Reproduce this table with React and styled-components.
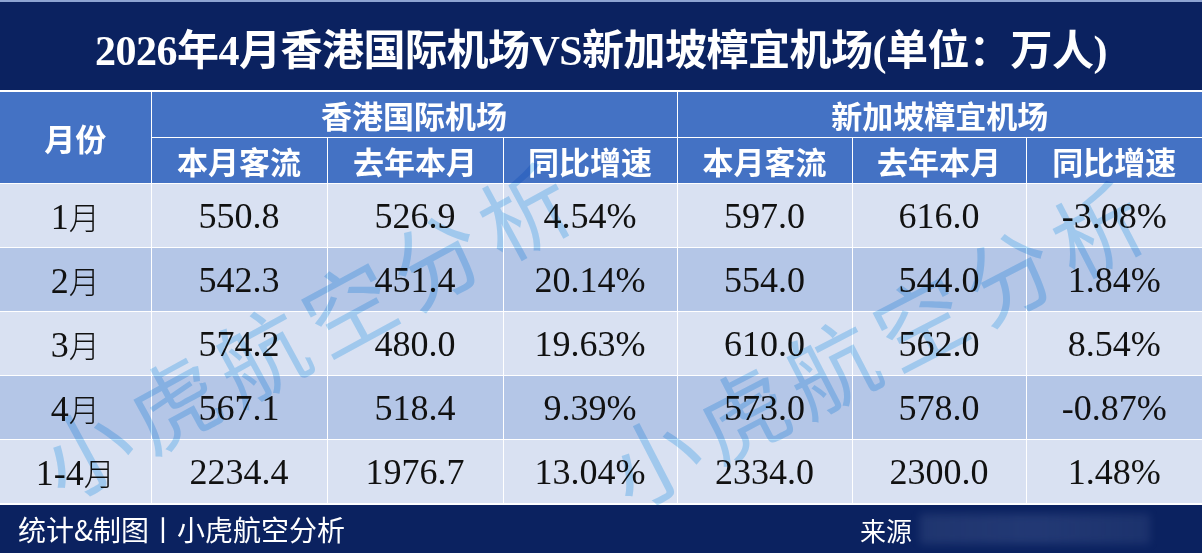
import styled, { createGlobalStyle } from "styled-components";

const GlobalStyle = createGlobalStyle`
  html, body {
    margin: 0;
    padding: 0;
    background: #ffffff;
  }
`;

const Board = styled.div`
  position: relative;
  width: 1202px;
  height: 553px;
  overflow: hidden;
  display: flex;
  flex-direction: column;
  background: #ffffff;
  font-family: "Liberation Serif", "Noto Sans CJK SC", serif;
`;

const TitleBar = styled.div`
  height: 88px;
  display: flex;
  align-items: center;
  justify-content: center;
  background: #0b2260;
  border-top: 2px solid #8ea4d2;
  color: #ffffff;
  font-size: 42px;
  font-weight: 700;
  letter-spacing: -0.5px;
`;

const Table = styled.table`
  width: 1202px;
  border-collapse: collapse;
  table-layout: fixed;
  border-top: 2px solid #ffffff;
`;

const HeadCell = styled.th`
  height: 44px;
  padding: 0;
  background: #4472c4;
  color: #ffffff;
  font-size: 31px;
  font-weight: 700;
  border: 1px solid #ffffff;
  text-align: center;
  vertical-align: middle;
  &:first-child { border-left: none; }
  &:last-child { border-right: none; }
`;

const Row = styled.tr`
  background: ${(p) => (p.$alt ? "#b4c6e7" : "#d9e1f2")};
`;

const Cell = styled.td`
  height: 63px;
  padding: 0;
  border: 1px solid #ffffff;
  text-align: center;
  vertical-align: middle;
  color: #111111;
  font-size: 36px;
  white-space: nowrap;
  &:first-child { border-left: none; }
  &:last-child { border-right: none; }
`;

const Unit = styled.span`
  font-family: "Noto Sans CJK SC", sans-serif;
  font-size: 31px;
  font-weight: 300;
`;

const Footer = styled.div`
  flex: 1;
  display: flex;
  align-items: center;
  background: #0b2260;
  border-top: 1px solid #ffffff;
  color: #ffffff;
  font-family: "Noto Sans CJK SC", sans-serif;
  font-size: 28px;
  padding-left: 18px;
`;

const Credit = styled.span`
  width: 842px;
`;

const Source = styled.span`
  font-size: 26px;
`;

const Smudge = styled.span`
  margin-left: 8px;
  width: 230px;
  height: 30px;
  background: linear-gradient(90deg, rgba(180, 195, 225, 0.12), rgba(120, 140, 190, 0.22), rgba(180, 195, 225, 0.1));
  filter: blur(4px);
`;

const Watermark = styled.div`
  position: absolute;
  left: ${(p) => p.$x}px;
  top: ${(p) => p.$y}px;
  transform: rotate(${(p) => p.$r}deg);
  transform-origin: left center;
  font-family: "Noto Sans CJK SC", sans-serif;
  font-size: 90px;
  line-height: 1;
  font-weight: 400;
  letter-spacing: 10px;
  color: rgba(70, 178, 240, 0.36);
  mix-blend-mode: multiply;
  white-space: nowrap;
  pointer-events: none;
`;

const rows = [
  ["1", "550.8", "526.9", "4.54%", "597.0", "616.0", "-3.08%"],
  ["2", "542.3", "451.4", "20.14%", "554.0", "544.0", "1.84%"],
  ["3", "574.2", "480.0", "19.63%", "610.0", "562.0", "8.54%"],
  ["4", "567.1", "518.4", "9.39%", "573.0", "578.0", "-0.87%"],
  ["1-4", "2234.4", "1976.7", "13.04%", "2334.0", "2300.0", "1.48%"],
];

const widths = [151, 176, 176, 174, 175, 174, 176];
const subHeads = ["本月客流", "去年本月", "同比增速"];

export default function App() {
  return (
    <Board>
      <GlobalStyle />
      <TitleBar>2026年4月香港国际机场VS新加坡樟宜机场(单位：万人)</TitleBar>
      <Table>
        <colgroup>
          {widths.map((w, i) => (
            <col key={i} style={{ width: w }} />
          ))}
        </colgroup>
        <thead>
          <tr>
            <HeadCell rowSpan={2}>月份</HeadCell>
            <HeadCell colSpan={3}>香港国际机场</HeadCell>
            <HeadCell colSpan={3}>新加坡樟宜机场</HeadCell>
          </tr>
          <tr>
            {[...subHeads, ...subHeads].map((t, i) => (
              <HeadCell key={i}>{t}</HeadCell>
            ))}
          </tr>
        </thead>
        <tbody>
          {rows.map((r, i) => (
            <Row key={r[0]} $alt={i % 2 === 1}>
              <Cell>
                {r[0]}
                <Unit>月</Unit>
              </Cell>
              {r.slice(1).map((v, j) => (
                <Cell key={j}>{v}</Cell>
              ))}
            </Row>
          ))}
        </tbody>
      </Table>
      <Footer>
        <Credit>统计&amp;制图丨小虎航空分析</Credit>
        <Source>来源</Source>
        <Smudge />
      </Footer>
      <Watermark $x={44} $y={424} $r={-28.6}>小虎航空分析</Watermark>
      <Watermark $x={612} $y={432} $r={-27.4}>小虎航空分析</Watermark>
    </Board>
  );
}
